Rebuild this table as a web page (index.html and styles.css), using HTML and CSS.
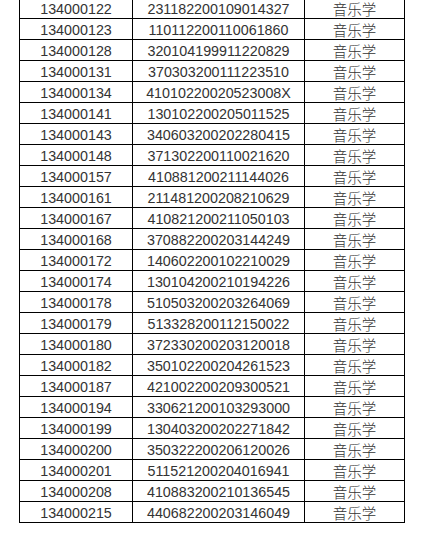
FILE: index.html
```html
<!DOCTYPE html>
<html lang="zh-CN">
<head>
<meta charset="utf-8">
<title>名单</title>
<link rel="stylesheet" href="styles.css">
</head>
<body>
<table class="list">
<tbody>
<tr><td>134000122</td><td>231182200109014327</td><td class="major">音乐学</td></tr>
<tr><td>134000123</td><td>110112200110061860</td><td class="major">音乐学</td></tr>
<tr><td>134000128</td><td>320104199911220829</td><td class="major">音乐学</td></tr>
<tr><td>134000131</td><td>370303200111223510</td><td class="major">音乐学</td></tr>
<tr><td>134000134</td><td>41010220020523008X</td><td class="major">音乐学</td></tr>
<tr><td>134000141</td><td>130102200205011525</td><td class="major">音乐学</td></tr>
<tr><td>134000143</td><td>340603200202280415</td><td class="major">音乐学</td></tr>
<tr><td>134000148</td><td>371302200110021620</td><td class="major">音乐学</td></tr>
<tr><td>134000157</td><td>410881200211144026</td><td class="major">音乐学</td></tr>
<tr><td>134000161</td><td>211481200208210629</td><td class="major">音乐学</td></tr>
<tr><td>134000167</td><td>410821200211050103</td><td class="major">音乐学</td></tr>
<tr><td>134000168</td><td>370882200203144249</td><td class="major">音乐学</td></tr>
<tr><td>134000172</td><td>140602200102210029</td><td class="major">音乐学</td></tr>
<tr><td>134000174</td><td>130104200210194226</td><td class="major">音乐学</td></tr>
<tr><td>134000178</td><td>510503200203264069</td><td class="major">音乐学</td></tr>
<tr><td>134000179</td><td>513328200112150022</td><td class="major">音乐学</td></tr>
<tr><td>134000180</td><td>372330200203120018</td><td class="major">音乐学</td></tr>
<tr><td>134000182</td><td>350102200204261523</td><td class="major">音乐学</td></tr>
<tr><td>134000187</td><td>421002200209300521</td><td class="major">音乐学</td></tr>
<tr><td>134000194</td><td>330621200103293000</td><td class="major">音乐学</td></tr>
<tr><td>134000199</td><td>130403200202271842</td><td class="major">音乐学</td></tr>
<tr><td>134000200</td><td>350322200206120026</td><td class="major">音乐学</td></tr>
<tr><td>134000201</td><td>511521200204016941</td><td class="major">音乐学</td></tr>
<tr><td>134000208</td><td>410883200210136545</td><td class="major">音乐学</td></tr>
<tr><td>134000215</td><td>440682200203146049</td><td class="major">音乐学</td></tr>
</tbody>
</table>
</body>
</html>
```
FILE: styles.css
```css
html, body {
  margin: 0;
  padding: 0;
  background: #fff;
}

.list {
  margin: -3px 0 0 19px;
  border-collapse: separate;
  border-spacing: 0;
  table-layout: fixed;
  width: 386px;
  font-family: "Liberation Sans", "Noto Sans CJK SC", sans-serif;
  font-size: 14.3px;
  color: #333;
}

.list td {
  box-sizing: border-box;
  height: 21px;
  padding: 2px 0 0;
  line-height: 18px;
  text-align: center;
  white-space: nowrap;
  border-top: 1px solid #000;
  border-left: 1px solid #000;
  overflow: hidden;
}

.list td:nth-child(1) { width: 113px; }
.list td:nth-child(2) { width: 172px; }
.list td:nth-child(3) {
  width: 101px;
  border-right: 1px solid #000;
}

.list td.major {
  font-family: "Noto Sans CJK SC", sans-serif;
  font-weight: 300;
  font-size: 14.5px;
}

.list tr:last-child td {
  height: 22px;
  border-bottom: 1px solid #000;
}
```
